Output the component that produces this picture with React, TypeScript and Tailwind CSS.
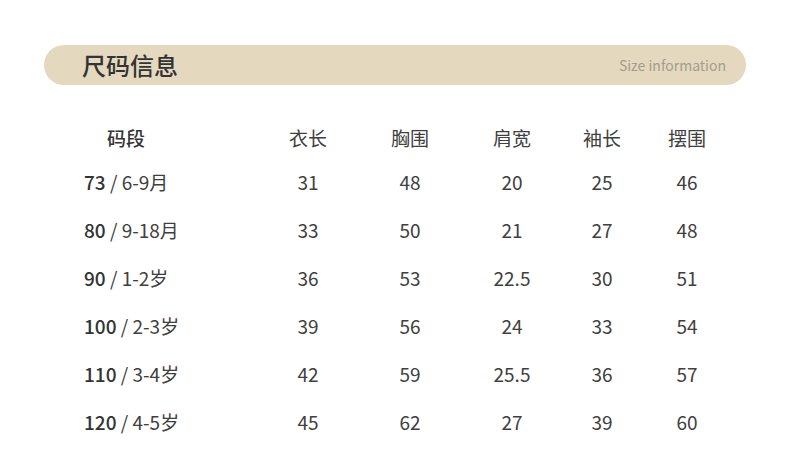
const headers = ["衣长", "胸围", "肩宽", "袖长", "摆围"];

const rows = [
  { code: "73", age: "6-9月", values: ["31", "48", "20", "25", "46"] },
  { code: "80", age: "9-18月", values: ["33", "50", "21", "27", "48"] },
  { code: "90", age: "1-2岁", values: ["36", "53", "22.5", "30", "51"] },
  { code: "100", age: "2-3岁", values: ["39", "56", "24", "33", "54"] },
  { code: "110", age: "3-4岁", values: ["42", "59", "25.5", "36", "57"] },
  { code: "120", age: "4-5岁", values: ["45", "62", "27", "39", "60"] },
];

const gridCols = "grid grid-cols-[174px_100px_104px_100px_80px_90px]";

export default function App() {
  return (
    <div
      className="w-[790px] h-[452px] bg-white overflow-hidden pt-[45px]"
      style={{ fontFamily: '"Noto Sans CJK SC", "Noto Sans", sans-serif' }}
    >
      <div className="mx-[44px] h-[40px] rounded-full bg-[#e4d9bf] flex items-center justify-between pl-[38px] pr-[20px]">
        <h1 className="text-[24px] font-medium text-[#333333] leading-none">尺码信息</h1>
        <span className="text-[14px] text-[#a39d8c] leading-none">Size information</span>
      </div>

      <div className="mt-[33px] ml-[84px] text-[19px] text-[#404040]">
        <div className={`${gridCols} h-[40px] items-center`}>
          <div className="pl-[23px] font-medium text-[#333333]">码段</div>
          {headers.map((h) => (
            <div key={h} className="text-center">
              {h}
            </div>
          ))}
        </div>
        {rows.map((r) => (
          <div key={r.code} className={`${gridCols} h-[48px] items-center`}>
            <div>
              <span className="font-medium text-[#333333]">{r.code}</span> / {r.age}
            </div>
            {r.values.map((v, i) => (
              <div key={i} className="text-center">
                {v}
              </div>
            ))}
          </div>
        ))}
      </div>
    </div>
  );
}
